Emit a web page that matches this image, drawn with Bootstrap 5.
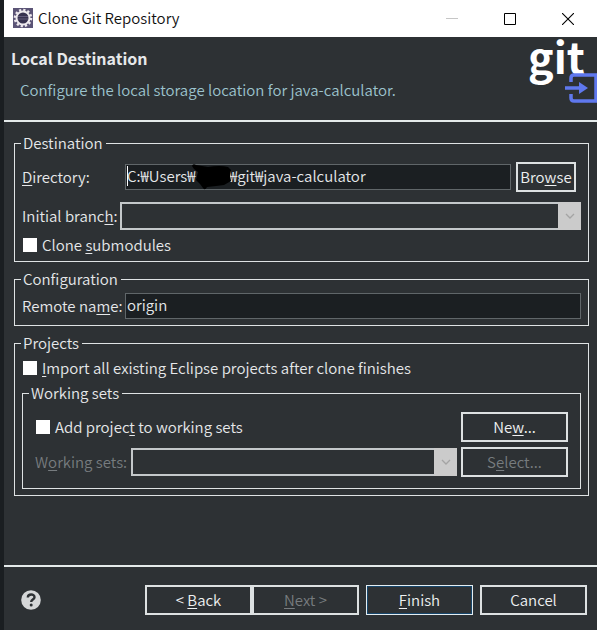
<!DOCTYPE html>
<html lang="en">
<head>
<meta charset="utf-8">
<meta name="viewport" content="width=device-width, initial-scale=1">
<title>Clone Git Repository</title>
<link href="https://cdn.jsdelivr.net/npm/bootstrap@5.3.0/dist/css/bootstrap.min.css" rel="stylesheet">
<style>
  body { background: #2d3134; color: #e6e8ea; font: 350 15px/20px "Noto Sans CJK KR", "Open Sans", sans-serif; border-left: 4px solid #1a1e21; }
  input, button, select { font-weight: 350; }
  .title-bar { height: 37px; background: #fff; color: #111; padding: 0 0 2px 9px; }
  .title-bar > span { padding-left: 5px; }
  .win-btn { width: 58px; height: 35px; background: none; color: #000; }
  .page-head { height: 85px; border-bottom: 2px solid #e4eaea; padding: 11px 0 0 7px; }
  .page-head h1 { font-size: 16px; line-height: 20px; }
  .page-head p { color: #9cc3cd; padding-left: 9px; }
  .brand-art { right: 0; top: 0; }
  .brand-art text { font-family: "Noto Sans CJK KR", sans-serif; font-size: 43px; font-weight: 700; fill: #fff; }
  .groups { padding: 11px 8px 11px 10px; gap: 7px; }
  fieldset { border: 1px solid #dfe3e4; padding: 0 7px 6px; }
  legend { float: none; width: auto; font-size: 15px; line-height: 20px; margin: 0 0 0 -1px; padding: 0 3px 0 2px; }
  .inner-set { padding: 0 12px 11px; }
  .inner-set > legend { margin-left: -6px; }
  .lbl-fixed { width: 103px; }
  .lbl-short { width: 98px; white-space: nowrap; }
  .lbl-set { width: 96px; white-space: nowrap; }
  .row-top { padding-top: 9px; }
  .row-mid { margin-top: 10px; }
  .row-next { margin-top: 5px; }
  .row-pair { padding: 5px 0; }
  .entry { height: 26px; border: 1px solid #606669; background: #1b1f22; color: #e6e8ea; padding: 0 2px 4px 1px; min-width: 0; outline: 0; }
  .combo { height: 28px; border: 2px solid #c4c8ca; background: #2d3134; appearance: none; opacity: 1; min-width: 0; }
  .combo-box::after { content: ""; position: absolute; right: 0; top: 0; width: 23px; height: 28px; background: #cbcbcb; }
  .combo-box svg { position: absolute; right: 6px; top: 11px; z-index: 1; }
  .push { height: 30px; border: 2px solid #dde1e2; background: #2d3134; color: #eef0f1; padding: 0 0 1px; }
  .push:disabled { color: #777c7f; }
  .wide { width: 107px; }
  .browse { width: 60px; margin: 0 5px; }
  .primary { border-color: #e4edf2; box-shadow: inset 0 0 0 1px #17466b; border-width: 1px; margin: 0 7px; }
  .tick { appearance: none; width: 14px; height: 14px; background: #fff; margin: 0 5px 0 1px; }
  .dim { color: #777c7f; }
  .scribble { left: 66px; top: -1px; }
  .caret { left: 2px; top: 2px; width: 1px; height: 20px; background: #fff; }
  .foot { border-top: 2px solid #e4eaea; padding: 18px 10px 15px 17px; }
  u { text-underline-offset: 2px; text-decoration-thickness: 1px; }
</style>
<script src="https://cdn.jsdelivr.net/npm/bootstrap@5.3.0/dist/js/bootstrap.bundle.min.js"></script>
</head>
<body class="min-vh-100 d-flex flex-column">
<header class="title-bar d-flex align-items-center">
  <svg width="20" height="20" viewBox="0 0 20 20" aria-hidden="true"><rect width="20" height="20" fill="#5b5476"/><circle cx="10" cy="10" r="8" fill="none" stroke="#eee9ee" stroke-width="2.6" stroke-dasharray="2.2 1.99"/><circle cx="10" cy="10" r="6.5" fill="#37324f" stroke="#eeeaee" stroke-width="2"/><path d="M5 8.5h10M5 11h10" stroke="#625b7b"/></svg>
  <span class="flex-grow-1">Clone Git Repository</span>
  <button class="win-btn border-0 p-0" aria-label="Minimize" disabled><svg width="12" height="12" viewBox="0 0 12 12"><path d="M0 5.500h12" stroke="#c6c6c6"/></svg></button>
  <button class="win-btn border-0 p-0" aria-label="Maximize"><svg width="12" height="12" viewBox="0 0 12 12"><path d="M.5.5h11v11H.5z" fill="none" stroke="currentColor"/></svg></button>
  <button class="win-btn border-0 p-0" aria-label="Close"><svg width="12" height="12" viewBox="0 0 12 12"><path d="M0 0l12 12M12 0L0 12" stroke="currentColor" stroke-width="1.1"/></svg></button>
</header>
<section class="page-head position-relative">
  <h1 class="fw-bold mb-0">Local Destination</h1>
  <p class="mb-0 mt-2 pt-1">Configure the local storage location for java-calculator.</p>
  <svg class="brand-art position-absolute overflow-visible" width="69" height="67" viewBox="0 0 69 67" role="img" aria-label="git">
    <text x="0" y="37">git</text>
    <path d="M43 45v-4q0-3 3-3h22v26H46q-3 0-3-3v-4" fill="none" stroke="#5f78ee" stroke-width="3.500"/>
    <path d="M37 51h15" stroke="#5f78ee" stroke-width="3.500"/><path d="M51 45l9 6-9 6z" fill="#5f78ee"/>
  </svg>
</section>
<main class="groups flex-grow-1 d-flex flex-column">
  <fieldset>
    <legend>Destination</legend>
    <div class="d-flex align-items-center row-top">
      <label class="lbl-fixed flex-shrink-0" for="dir"><u>D</u>irectory:</label>
      <div class="position-relative flex-grow-1 d-flex">
        <input class="entry flex-grow-1" id="dir" value="C:₩Users₩&nbsp;&nbsp;&nbsp;&nbsp;&nbsp;&nbsp;&nbsp;&nbsp;&nbsp;&nbsp;₩git₩java-calculator">
        <span class="caret position-absolute"></span>
        <svg class="scribble position-absolute" width="50" height="30" viewBox="0 0 50 30" aria-hidden="true"><path d="M1 3q1-3 4-1l12 2q12-2 20 0l3 3-1 6 1 5-7 4-8 1-9 1q-2 4-4 1l-3-4-4-4 2-8-4-3z" fill="#000"/></svg>
      </div>
      <button class="push browse">Bro<u>w</u>se</button>
    </div>
    <div class="d-flex align-items-center row-mid">
      <label class="lbl-short flex-shrink-0" for="branch">Initial branc<u>h</u>:</label>
      <div class="combo-box position-relative flex-grow-1 d-flex">
        <select class="combo flex-grow-1" id="branch" disabled></select>
        <svg width="10" height="7" viewBox="0 0 10 7"><path d="M1 1l4 4 4-4" fill="none" stroke="#a4a4a4" stroke-width="1.300"/></svg>
      </div>
    </div>
    <div class="d-flex align-items-center row-next"><input class="tick" type="checkbox" id="sub"><label for="sub">Clone <u>s</u>ubmodules</label></div>
  </fieldset>
  <fieldset>
    <legend>Configuration</legend>
    <div class="d-flex align-items-center pt-1">
      <label class="lbl-fixed flex-shrink-0" for="remote">Remote na<u>m</u>e:</label>
      <input class="entry flex-grow-1" id="remote" value="origin">
    </div>
  </fieldset>
  <fieldset>
    <legend>Projects</legend>
    <div class="d-flex align-items-center row-pair"><input class="tick" type="checkbox" id="imp"><label for="imp"><u>I</u>mport all existing Eclipse projects after clone finishes</label></div>
    <fieldset class="inner-set">
      <legend>Working sets</legend>
      <div class="d-flex align-items-center justify-content-between row-top">
        <div class="d-flex align-items-center"><input class="tick" type="checkbox" id="add"><label for="add">Add projec<u>t</u> to working sets</label></div>
        <button class="push wide">Ne<u>w</u>...</button>
      </div>
      <div class="d-flex align-items-center row-next">
        <label class="lbl-set dim flex-shrink-0" for="ws">W<u>o</u>rking sets:</label>
        <div class="combo-box position-relative flex-grow-1 d-flex me-1">
          <select class="combo flex-grow-1" id="ws" disabled></select>
          <svg width="10" height="7" viewBox="0 0 10 7"><path d="M1 1l4 4 4-4" fill="none" stroke="#a4a4a4" stroke-width="1.300"/></svg>
        </div>
        <button class="push wide" disabled>S<u>e</u>lect...</button>
      </div>
    </fieldset>
  </fieldset>
</main>
<footer class="foot d-flex align-items-center">
  <button class="border-0 p-0 bg-transparent d-flex me-auto" aria-label="Help"><svg width="20" height="20" viewBox="0 0 20 20"><circle cx="10" cy="10" r="9.800" fill="#d5d7d8"/><path d="M6.800 7.500c.2-4 6.700-4 6.700-.2 0 2.300-3.300 2.300-3.300 4.700" fill="none" stroke="#2d3134" stroke-width="2.400"/><circle cx="10.200" cy="15" r="1.500" fill="#2d3134"/></svg></button>
  <button class="push wide">&lt; <u>B</u>ack</button>
  <button class="push wide" disabled><u>N</u>ext &gt;</button>
  <button class="push wide primary"><u>F</u>inish</button>
  <button class="push wide">Cancel</button>
</footer>
</body>
</html>
